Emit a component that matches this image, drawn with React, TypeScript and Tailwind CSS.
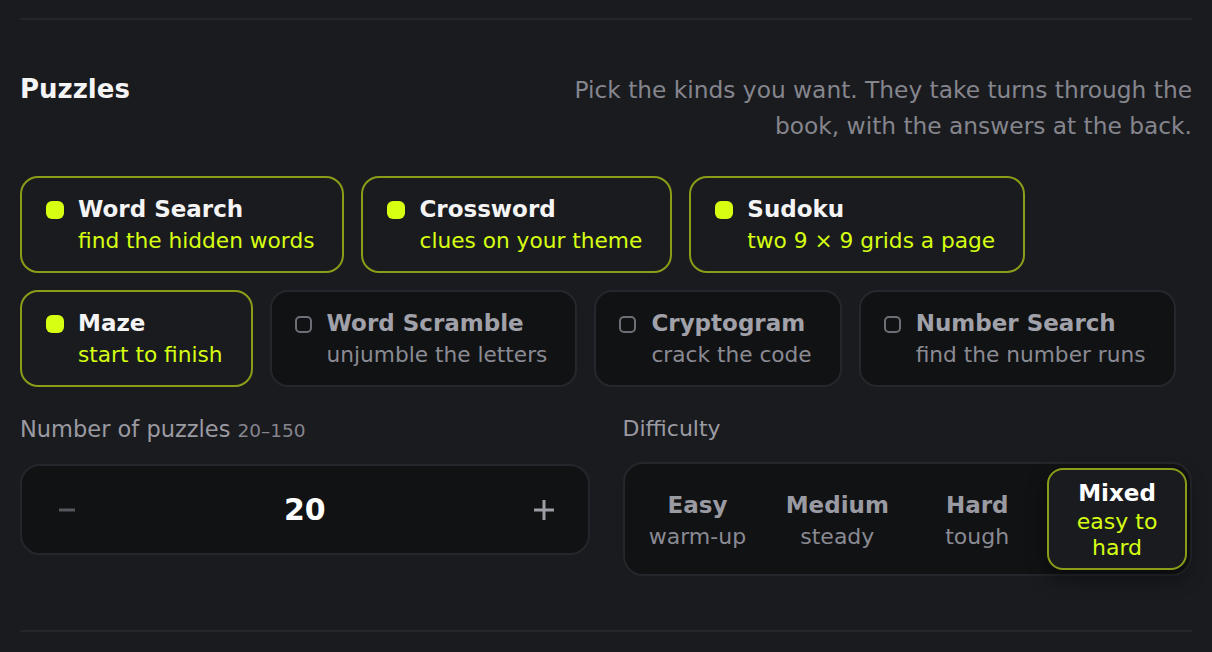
import React, { useState } from "react";

type Kind = { name: string; hint: string; on: boolean };

const KINDS: Kind[][] = [
  [
    { name: "Word Search", hint: "find the hidden words", on: true },
    { name: "Crossword", hint: "clues on your theme", on: true },
    { name: "Sudoku", hint: "two 9 × 9 grids a page", on: true },
  ],
  [
    { name: "Maze", hint: "start to finish", on: true },
    { name: "Word Scramble", hint: "unjumble the letters", on: false },
    { name: "Cryptogram", hint: "crack the code", on: false },
    { name: "Number Search", hint: "find the number runs", on: false },
  ],
];

const LEVELS = [
  { name: "Easy", hint: "warm-up" },
  { name: "Medium", hint: "steady" },
  { name: "Hard", hint: "tough" },
  { name: "Mixed", hint: "easy to hard" },
];

function KindChip({ kind }: { kind: Kind }) {
  return kind.on ? (
    <button className="flex items-start gap-[14px] rounded-[18px] border-2 border-[#8b9c18] bg-[#1a1b1f] pb-[15px] pl-[24px] pr-[28px] pt-[16px] text-left">
      <span className="mt-[7px] h-[18px] w-[18px] shrink-0 rounded-[6px] bg-[#d6ff12]" />
      <span className="flex flex-col">
        <span className="text-[23px] font-bold leading-[31px] text-[#f4f4f5]">{kind.name}</span>
        <span className="text-[21.7px] leading-[31px] text-[#d6ff12]">{kind.hint}</span>
      </span>
    </button>
  ) : (
    <button className="flex items-start gap-[15px] rounded-[18px] border-2 border-[#26272c] bg-[#111214] pb-[15px] pl-[23px] pr-[28px] pt-[16px] text-left">
      <span className="mt-[8px] h-[17px] w-[17px] shrink-0 rounded-[5px] border-2 border-[#6e6e76]" />
      <span className="flex flex-col">
        <span className="text-[23px] font-bold leading-[31px] text-[#a1a1aa]">{kind.name}</span>
        <span className="text-[21.7px] leading-[31px] text-[#8a8a93]">{kind.hint}</span>
      </span>
    </button>
  );
}

export default function App() {
  const [count, setCount] = useState(20);
  const [level, setLevel] = useState(3);

  return (
    <div
      className="min-h-[652px] w-full bg-[#1a1b1f] px-[20px] pt-[18px]"
      style={{ fontFamily: "'DejaVu Sans', 'Noto Sans', sans-serif" }}
    >
      <div className="h-[2px] bg-[#25262b]" />

      <div className="mt-[50px] flex items-start justify-between">
        <h2 className="mt-[1px] text-[26px] font-bold leading-[36px] text-[#f4f4f5]">Puzzles</h2>
        <p className="mt-[2px] w-[640px] text-right text-[23.3px] leading-[36px] text-[#85858d]">
          Pick the kinds you want. They take turns through the book, with the answers at the back.
        </p>
      </div>

      <div className="mt-[32px] flex flex-col gap-[17px]">
        {KINDS.map((row, i) => (
          <div key={i} className="flex gap-[17px]">
            {row.map((k) => (
              <KindChip key={k.name} kind={k} />
            ))}
          </div>
        ))}
      </div>

      <div className="mt-[26px] grid grid-cols-2 gap-[33px]">
        <div>
          <div className="text-[22.5px] leading-[32px] text-[#9a9aa2]">
            Number of puzzles <span className="text-[18.5px] text-[#85858d]">20–150</span>
          </div>
          <div className="mt-[17px] flex h-[91px] items-center justify-between rounded-[20px] border-2 border-[#25262b] bg-[#111214] pl-[35px] pr-[33px]">
            <button aria-label="fewer" onClick={() => setCount(Math.max(20, count - 1))}>
              <svg width="20" height="20" viewBox="0 0 20 20">
                <line x1="2" y1="10" x2="18" y2="10" stroke="#56565d" strokeWidth="3" />
              </svg>
            </button>
            <span className="text-[30px] font-bold text-white">{count}</span>
            <button aria-label="more" onClick={() => setCount(Math.min(150, count + 1))}>
              <svg width="22" height="22" viewBox="0 0 22 22">
                <line x1="1" y1="11" x2="21" y2="11" stroke="#9d9da5" strokeWidth="3" />
                <line x1="11" y1="1" x2="11" y2="21" stroke="#9d9da5" strokeWidth="3" />
              </svg>
            </button>
          </div>
        </div>

        <div>
          <div className="text-[22px] leading-[32px] text-[#9a9aa2]">Difficulty</div>
          <div className="mt-[17px] grid h-[114px] grid-cols-4 rounded-[20px] border-2 border-[#25262b] bg-[#111214] px-[3px] py-[4px]">
            {LEVELS.map((l, i) =>
              i === level ? (
                <button
                  key={l.name}
                  className="flex flex-col items-center justify-center rounded-[16px] border-2 border-[#8b9c18] bg-[#1a1b1f] px-[12px] text-center shadow-[0_8px_20px_rgba(0,0,0,0.45)]"
                >
                  <span className="text-[23px] font-bold leading-[31px] text-white">{l.name}</span>
                  <span className="text-[22px] leading-[26px] text-[#d6ff12]">{l.hint}</span>
                </button>
              ) : (
                <button
                  key={l.name}
                  onClick={() => setLevel(i)}
                  className="flex flex-col items-center justify-center pt-[3px] text-center"
                >
                  <span className="text-[23px] font-bold leading-[31px] text-[#9a9aa2]">{l.name}</span>
                  <span className="text-[22px] leading-[31px] text-[#8a8a93]">{l.hint}</span>
                </button>
              )
            )}
          </div>
        </div>
      </div>

      <div className="mt-[54px] h-[2px] bg-[#25262b]" />
    </div>
  );
}
